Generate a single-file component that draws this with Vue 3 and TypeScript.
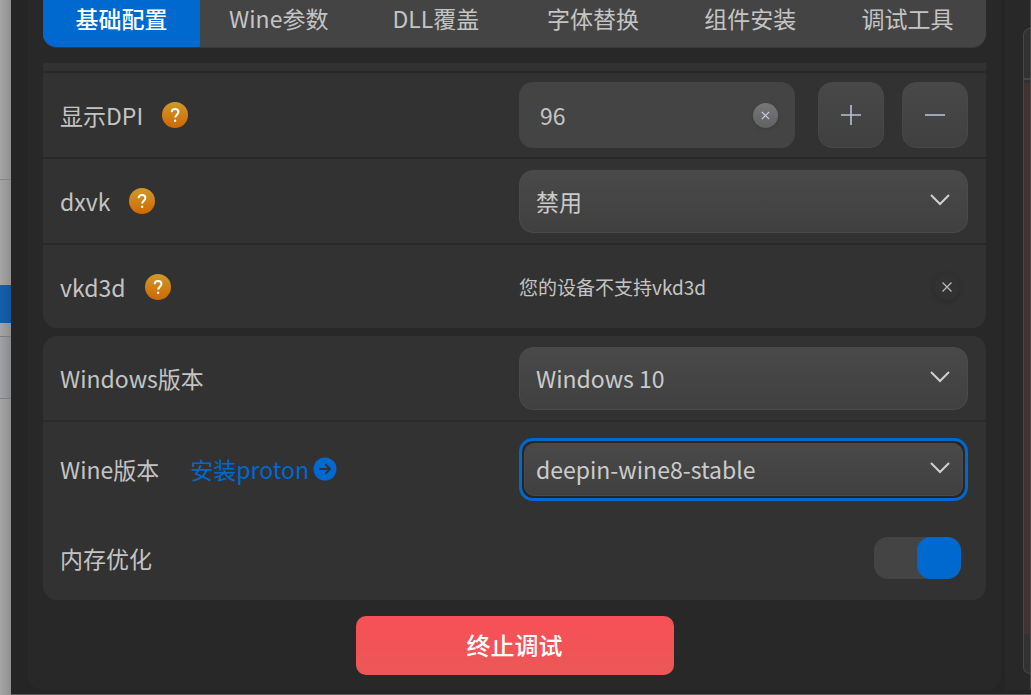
<script setup lang="ts">
import { ref } from 'vue'

const tabs = ['基础配置', 'Wine参数', 'DLL覆盖', '字体替换', '组件安装', '调试工具']
const activeTab = ref(tabs[0])
const dpi = ref('96')
const dxvk = ref('禁用')
const windowsVersion = ref('Windows 10')
const wineVersion = ref('deepin-wine8-stable')
const memory = ref(true)

function step(delta: number) {
  dpi.value = String(Number(dpi.value || 0) + delta)
}
</script>

<template>
  <div class="screen">
    <div class="behind" aria-hidden="true">
      <div class="cell first"></div>
      <div class="cell second"></div>
      <div class="cell picked"></div>
      <div class="cell gap"></div>
      <div class="cell tinted"></div>
    </div>
    <div class="window">
      <main class="panel">
        <nav class="tabs" role="tablist">
          <button
            v-for="tab in tabs"
            :key="tab"
            type="button"
            role="tab"
            class="tab"
            :class="{ active: tab === activeTab }"
            :aria-selected="tab === activeTab"
            @click="activeTab = tab"
          >{{ tab }}</button>
        </nav>

        <section class="group scrolled">
          <div class="row">
            <div class="name">
              <label for="dpi">显示DPI</label>
              <button type="button" class="help" aria-label="显示DPI">
                <svg viewBox="0 0 26 26"><path d="M9.6 10.2C9.8 8.2 11 7 13 7c2 0 3.4 1.2 3.4 3 0 2.6-3.2 2.9-3.2 5.6" /><circle cx="13.1" cy="18.7" r="1.2" /></svg>
              </button>
            </div>
            <div class="control">
              <div class="entry">
                <input id="dpi" v-model="dpi" type="text" />
                <button type="button" class="clear" aria-label="×" @click="dpi = ''">
                  <svg viewBox="0 0 24 24"><path d="M8.5 8.5l7 7M15.5 8.5l-7 7" /></svg>
                </button>
              </div>
              <div class="steps">
                <button type="button" class="step" aria-label="+" @click="step(1)">
                  <svg viewBox="0 0 20 20"><path d="M0 10h20M10 0v20" /></svg>
                </button>
                <button type="button" class="step" aria-label="−" @click="step(-1)">
                  <svg viewBox="0 0 20 20"><path d="M0 10h20" /></svg>
                </button>
              </div>
            </div>
          </div>

          <div class="row">
            <div class="name">
              <label for="dxvk">dxvk</label>
              <button type="button" class="help" aria-label="dxvk">
                <svg viewBox="0 0 26 26"><path d="M9.6 10.2C9.8 8.2 11 7 13 7c2 0 3.4 1.2 3.4 3 0 2.6-3.2 2.9-3.2 5.6" /><circle cx="13.1" cy="18.7" r="1.2" /></svg>
              </button>
            </div>
            <div class="combo">
              <select id="dxvk" v-model="dxvk"><option>禁用</option></select>
              <svg class="chevron" viewBox="0 0 20 12"><path d="M1 1l9 9 9-9" /></svg>
            </div>
          </div>

          <div class="row">
            <div class="name">
              <span>vkd3d</span>
              <button type="button" class="help" aria-label="vkd3d">
                <svg viewBox="0 0 26 26"><path d="M9.6 10.2C9.8 8.2 11 7 13 7c2 0 3.4 1.2 3.4 3 0 2.6-3.2 2.9-3.2 5.6" /><circle cx="13.1" cy="18.7" r="1.2" /></svg>
              </button>
            </div>
            <div class="control notice">
              <span>您的设备不支持vkd3d</span>
              <button type="button" class="dismiss" aria-label="×">
                <svg viewBox="0 0 26 26"><path d="M8.5 8.5l9 9M17.5 8.5l-9 9" /></svg>
              </button>
            </div>
          </div>
        </section>

        <section class="group">
          <div class="row">
            <div class="name"><label for="winver">Windows版本</label></div>
            <div class="combo">
              <select id="winver" v-model="windowsVersion"><option>Windows 10</option></select>
              <svg class="chevron" viewBox="0 0 20 12"><path d="M1 1l9 9 9-9" /></svg>
            </div>
          </div>

          <div class="row tall">
            <div class="name">
              <label for="winever">Wine版本</label>
              <a class="install" href="#proton">
                <span>安装proton</span>
                <svg viewBox="0 0 24 24"><circle cx="12" cy="12" r="11.5" /><path d="M6.5 12h10.2M12.3 7.2l4.8 4.8-4.8 4.8" /></svg>
              </a>
            </div>
            <div class="combo focused">
              <select id="winever" v-model="wineVersion"><option>deepin-wine8-stable</option></select>
              <svg class="chevron" viewBox="0 0 20 12"><path d="M1 1l9 9 9-9" /></svg>
            </div>
          </div>

          <div class="row plain">
            <div class="name"><label for="memory">内存优化</label></div>
            <div class="control end">
              <input id="memory" v-model="memory" class="switch" type="checkbox" role="switch" />
            </div>
          </div>
        </section>

        <button type="button" class="stop">终止调试</button>
      </main>

      <aside class="side" aria-hidden="true">
        <div class="card">
          <div class="card-head"></div>
          <div class="card-body"></div>
          <div class="card-foot"></div>
        </div>
      </aside>
    </div>
  </div>
</template>

<style>
body {
  margin: 0;
  background: #252525;
}
</style>

<style scoped>
.screen {
  display: flex;
  min-height: 100vh;
  font-family: "Noto Sans CJK SC", "Noto Sans", sans-serif;
  font-size: 23px;
  line-height: 34px;
  color: #c4c4c4;
}
.screen *,
.screen {
  box-sizing: border-box;
}
button,
input,
select {
  margin: 0;
  padding: 0;
  border: 0;
  font: inherit;
  color: inherit;
  background: none;
}
svg {
  display: block;
  fill: none;
}

.behind {
  flex: 0 0 11px;
  background: linear-gradient(90deg, #a6a6a6, #8f8f8f);
}
.cell.first {
  height: 180px;
  border-bottom: 1px solid #858585;
}
.cell.second {
  height: 105px;
}
.cell.picked {
  height: 38px;
  background: linear-gradient(90deg, #1260ab, #14549a);
}
.cell.gap {
  height: 14px;
  border-bottom: 1px solid #7c7d80;
}
.cell.tinted {
  height: 62px;
  border-bottom: 1px solid #7c7d80;
  background: linear-gradient(90deg, #a0a2a5, #888a8d);
}

.window {
  flex: 1;
  display: flex;
  padding: 0 0 4px 17px;
  background: #252525;
  border-bottom: 1px solid #5c5c5c;
}
.panel {
  flex: 1;
  display: flex;
  flex-direction: column;
  padding: 0 15px 15px;
  background: #282828;
  border-radius: 0 0 14px 14px;
}

.tabs {
  display: grid;
  grid-template-columns: repeat(6, 1fr);
  height: 48px;
  margin-bottom: 15px;
  overflow: hidden;
  background: #444;
  border-radius: 0 0 14px 14px;
  border-bottom: 1px solid #3a3a3a;
}
.tab {
  padding-bottom: 12px;
}
.tab.active {
  font-weight: 500;
  color: #fff;
  background: #0069cf;
}

.group {
  margin-bottom: 8px;
  background: #323232;
  border-radius: 14px;
}
.group.scrolled {
  padding-top: 8px;
  border-radius: 0 0 14px 14px;
}
.row {
  display: grid;
  grid-template-columns: minmax(0, 459fr) minmax(0, 449fr);
  align-items: center;
  height: 84px;
  padding: 0 18px 0 17px;
}
.scrolled .row {
  height: 86px;
  border-top: 2px solid #292929;
}
.scrolled .row:last-child {
  height: 85px;
}
.row.tall {
  height: 96px;
  border-top: 2px solid #2b2b2b;
}
.name {
  display: flex;
  align-items: center;
}
.help {
  width: 26px;
  height: 26px;
  margin-left: 19px;
  border-radius: 50%;
  background: linear-gradient(#cf9a2a, #d06703);
}
.help svg {
  width: 26px;
  height: 26px;
}
.help path {
  stroke: #fff;
  stroke-width: 2;
}
.help circle {
  fill: #fff;
}

.control {
  display: flex;
  align-items: center;
}
.entry {
  flex: 1;
  min-width: 0;
  display: flex;
  align-items: center;
  height: 66px;
  margin-right: 23px;
  padding: 0 17px 0 21px;
  background: #444;
  border-radius: 14px;
}
.entry input {
  flex: 1;
  min-width: 0;
  outline: none;
}
.clear {
  width: 25px;
  height: 25px;
  border-radius: 50%;
  background: linear-gradient(#777, #626262);
  box-shadow: 0 1px 3px #3a3a3a;
}
.clear svg {
  width: 25px;
  height: 25px;
}
.clear path {
  stroke: #c3cbe0;
  stroke-width: 1.2;
}
.steps {
  display: flex;
  gap: 18px;
}
.step {
  display: flex;
  align-items: center;
  justify-content: center;
  width: 66px;
  height: 66px;
  border: 1px solid #484848;
  border-radius: 14px;
  background: linear-gradient(#484848, #404040);
}
.step svg {
  width: 20px;
  height: 20px;
}
.step path {
  stroke: #b4c0dc;
  stroke-width: 1.6;
}

.combo {
  position: relative;
}
.combo select {
  display: block;
  width: 100%;
  height: 63px;
  padding: 0 50px 0 16px;
  border: 1px solid #4a4a4a;
  border-radius: 14px;
  appearance: none;
  outline: none;
  color: #cbcbcb;
  background: linear-gradient(#494949, #404040);
}
.chevron {
  position: absolute;
  top: 50%;
  right: 18px;
  width: 20px;
  height: 12px;
  margin-top: -7px;
  pointer-events: none;
}
.chevron path {
  stroke: #d0d0d0;
  stroke-width: 2;
}
.combo.focused {
  padding: 2px;
  border: 3px solid #0069cf;
  border-radius: 14px;
  background: #262626;
}
.combo.focused select {
  height: 53px;
  padding: 0 45px 0 11px;
  border-radius: 10px;
}
.combo.focused .chevron {
  right: 15px;
}

.notice {
  justify-content: space-between;
  padding-right: 8px;
  font-size: 19px;
}
.dismiss {
  width: 26px;
  height: 26px;
  border-radius: 50%;
  background: #323232;
  box-shadow: 0 1px 4px #2a2a2a;
}
.dismiss svg {
  width: 26px;
  height: 26px;
}
.dismiss path {
  stroke: #b8b8b8;
  stroke-width: 1.3;
}

.install {
  display: flex;
  align-items: center;
  gap: 4px;
  margin-left: 31px;
  color: #0069cf;
  text-decoration: none;
}
.install svg {
  width: 24px;
  height: 24px;
}
.install circle {
  fill: #0069cf;
}
.install path {
  stroke: #323232;
  stroke-width: 1.8;
}

.end {
  justify-content: flex-end;
  padding-right: 7px;
}
.switch {
  appearance: none;
  width: 87px;
  height: 42px;
  border-radius: 14px;
  background: #444;
}
.switch::before {
  content: "";
  display: block;
  width: 44px;
  height: 42px;
  border-radius: 14px;
  background: #888;
}
.switch:checked::before {
  margin-left: auto;
  background: #0069cf;
}

.stop {
  align-self: center;
  width: 318px;
  height: 59px;
  margin-top: 8px;
  padding-bottom: 2px;
  border-radius: 10px;
  font-size: 24px;
  font-weight: 500;
  color: #fff;
  background: linear-gradient(#f75057, #ec5757);
}

.side {
  flex: 0 0 26px;
  margin-left: 4px;
  padding: 28px 0 16px 18px;
  background: #282828;
  border-right: 1px solid #4a4a4a;
}
.card {
  display: flex;
  flex-direction: column;
  height: 100%;
  overflow: hidden;
  border: 1px solid #484848;
  border-right: 0;
  border-radius: 14px 0 0 14px;
  background: #323232;
}
.card-head {
  height: 51px;
  border-bottom: 2px solid #484848;
}
.card-body {
  flex: 1;
  margin-top: 3px;
  background: #443233;
}
.card-foot {
  height: 39px;
}
</style>
